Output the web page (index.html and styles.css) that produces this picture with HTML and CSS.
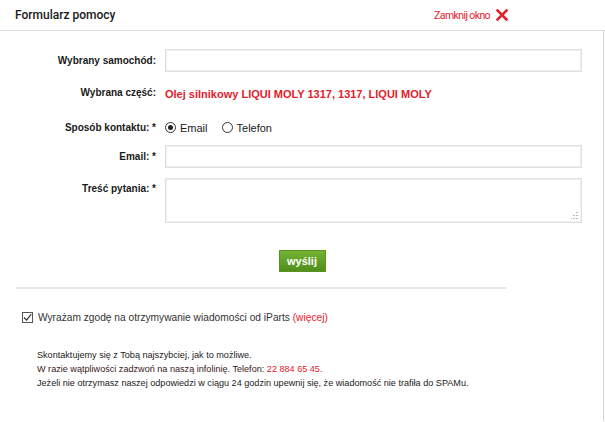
FILE: index.html
```html
<!DOCTYPE html>
<html lang="pl">
<head>
<meta charset="utf-8">
<title>Formularz pomocy</title>
<link rel="stylesheet" href="styles.css">
</head>
<body>
<div class="dialog">
  <header class="head">
    <h1 class="title">Formularz pomocy</h1>
    <a class="close" href="#">Zamknij okno
      <svg class="close-icon" width="12" height="12" viewBox="0 0 12 12"><path d="M1.5 1.5 L10.5 10.5 M10.5 1.5 L1.5 10.5" stroke="#e4202c" stroke-width="2.6" stroke-linecap="square"/></svg>
    </a>
  </header>
  <div class="content">
    <form class="form">
      <div class="row row-1">
        <label class="label">Wybrany samochód:</label>
        <div class="field"><input class="input" type="text"></div>
      </div>
      <div class="row row-2">
        <span class="label">Wybrana część:</span>
        <div class="field"><span class="part">Olej silnikowy LIQUI MOLY 1317, 1317, LIQUI MOLY</span></div>
      </div>
      <div class="row row-3">
        <span class="label">Sposób kontaktu: *</span>
        <div class="field radios">
          <span class="radio checked"></span><span class="radio-text">Email</span>
          <span class="radio radio-2"></span><span class="radio-text">Telefon</span>
        </div>
      </div>
      <div class="row row-4">
        <label class="label">Email: *</label>
        <div class="field"><input class="input" type="text"></div>
      </div>
      <div class="row row-5">
        <label class="label">Treść pytania: *</label>
        <div class="field area-wrap">
          <textarea class="textarea"></textarea>
          <svg class="grip" width="7" height="7" viewBox="0 0 7 7"><g fill="#b5b5b5"><rect x="5" y="0" width="2" height="1"/><rect x="5" y="3" width="2" height="1"/><rect x="2" y="3" width="2" height="1"/><rect x="5" y="6" width="2" height="1"/><rect x="2" y="6" width="2" height="1"/><rect x="0" y="6" width="1" height="1"/></g></svg>
        </div>
      </div>
      <div class="actions"><button class="send" type="button">wyślij</button></div>
    </form>
    <hr class="sep">
    <div class="consent">
      <span class="checkbox"><svg width="9" height="9" viewBox="0 0 9 9"><path d="M1 4.5 L3.6 7 L8.2 1.2" fill="none" stroke="#333" stroke-width="1.2"/></svg></span>
      <span class="consent-text">Wyrażam zgodę na otrzymywanie wiadomości od iParts <a class="more" href="#">(więcej)</a></span>
    </div>
    <div class="info">
      <p class="info-line">Skontaktujemy się z Tobą najszybciej, jak to możliwe.</p>
      <p class="info-line info-dark">W razie wątpliwości zadzwoń na naszą infolinię. Telefon: <span class="phone">22 884 65 45.</span></p>
      <p class="info-line">Jeżeli nie otrzymasz naszej odpowiedzi w ciągu 24 godzin upewnij się, że wiadomość nie trafiła do SPAMu.</p>
    </div>
  </div>
</div>
</body>
</html>
```

FILE: styles.css
```css
html, body {
  margin: 0;
  padding: 0;
  background: #fff;
}
body {
  font-family: "Liberation Sans", Arial, sans-serif;
  color: #222;
  width: 605px;
  height: 422px;
  overflow: hidden;
}
.dialog {
  width: 605px;
  height: 422px;
}
.head {
  height: 31px;
  border-bottom: 1px solid #dcdcdc;
  display: flex;
  align-items: center;
  justify-content: space-between;
  padding: 0 97px 0 15px;
  box-sizing: border-box;
}
.title {
  margin: 0;
  font-family: Roboto, "Noto Sans", sans-serif;
  font-size: 12px;
  font-weight: 500;
  color: #1a1a1a;
}
.close {
  display: flex;
  align-items: center;
  gap: 6px;
  font-family: Roboto, "Noto Sans", sans-serif;
  font-size: 10.5px;
  letter-spacing: -0.6px;
  color: #e4202c;
  text-decoration: none;
}
.close-icon {
  display: block;
}
.content {
  height: 390px;
  border-right: 1px solid #d6d6d6;
  width: 604px;
  box-sizing: border-box;
  padding-top: 18px;
}
.form {
  margin: 0;
}
.row {
  display: flex;
  align-items: center;
  height: 23px;
}
.row-2 { margin-top: 9px; }
.row-3 { margin-top: 12px; }
.row-4 { margin-top: 6px; }
.row-5 {
  margin-top: 10px;
  height: 44px;
  align-items: flex-start;
}
.row-5 .label { padding-top: 5px; }
.label {
  width: 165px;
  padding-right: 9px;
  box-sizing: border-box;
  text-align: right;
  font-size: 10px;
  font-weight: bold;
  color: #1a1a1a;
  flex: none;
}
.field {
  width: 417px;
  flex: none;
}
.input {
  display: block;
  width: 417px;
  height: 23px;
  box-sizing: border-box;
  border: 1px solid #e0e0e0;
  outline: 1px solid #f0f0f0;
  outline-offset: -2px;
  margin: 0;
  padding: 0 4px;
  background: #fff;
}
.area-wrap {
  position: relative;
}
.textarea {
  display: block;
  width: 417px;
  height: 45px;
  box-sizing: border-box;
  border: 1px solid #e0e0e0;
  outline: 1px solid #f0f0f0;
  outline-offset: -2px;
  margin: 0;
  padding: 2px 4px;
  resize: none;
  background: #fff;
}
.grip {
  position: absolute;
  right: 4px;
  bottom: 4px;
  display: block;
}
.part {
  font-size: 11px;
  font-weight: bold;
  color: #e4202c;
}
.radios {
  display: flex;
  align-items: center;
  font-size: 11px;
  color: #1a1a1a;
}
.radio {
  width: 11px;
  height: 11px;
  border: 1px solid #333;
  border-radius: 50%;
  box-sizing: border-box;
  display: flex;
  align-items: center;
  justify-content: center;
  flex: none;
}
.radio.checked::after {
  content: "";
  width: 5px;
  height: 5px;
  border-radius: 50%;
  background: #222;
}
.radio-text {
  margin-left: 4px;
}
.radio-2 {
  margin-left: 14px;
}
.actions {
  display: flex;
  justify-content: center;
  margin-top: 28px;
}
.send {
  width: 47px;
  height: 22px;
  border: 1px solid #5a9420;
  background: linear-gradient(#74b233, #4f8f1c);
  color: #fff;
  font-family: "Liberation Sans", Arial, sans-serif;
  font-size: 11px;
  font-weight: bold;
  padding: 0;
  margin-left: 1px;
}
.sep {
  margin: 15px 0 0 16px;
  width: 490px;
  height: 2px;
  border: 0;
  background: #e6e6e6;
}
.consent {
  display: flex;
  align-items: center;
  margin: 23px 0 0 22px;
  font-size: 10.2px;
  color: #333;
}
.checkbox {
  width: 11px;
  height: 11px;
  border: 1px solid #555;
  box-sizing: border-box;
  display: flex;
  align-items: center;
  justify-content: center;
  flex: none;
}
.checkbox svg { display: block; }
.consent-text {
  margin-left: 5px;
}
.more {
  color: #e4202c;
  text-decoration: none;
}
.info {
  margin: 25px 0 0 37px;
  font-size: 9.1px;
  line-height: 14px;
  color: #222;
}
.info-line {
  margin: 0;
}
.info-dark {
  color: #3a1818;
}
.phone {
  color: #e4202c;
}
```
